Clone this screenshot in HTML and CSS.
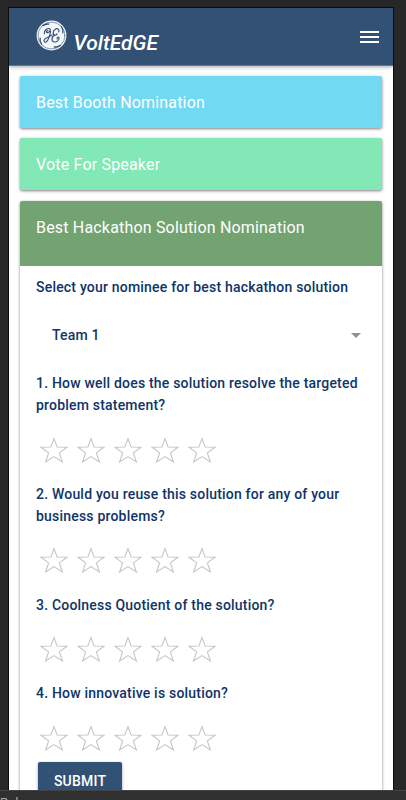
FILE: index.html
```html
<!DOCTYPE html>
<html lang="en">
  <head>
    <meta charset="UTF-8" />
    <meta name="viewport" content="width=device-width, initial-scale=1.0" />
    <title>VoltEdGE</title>
    <link rel="stylesheet" href="styles.css">
  </head>
  <body>
    <svg class="symbols">
      <symbol id="star" viewBox="0 0 28 26">
        <path d="M14 1.6 L17.1 10 L26.9 10.3 L19.4 15.9 L22.4 25 L14 19.6 L5.6 25 L8.6 15.9 L1.1 10.3 L10.9 10 Z" />
      </symbol>
    </svg>

    <div class="screen">
      <header class="header">
        <svg class="logo" viewBox="0 0 32 32">
          <circle class="logo-disc" cx="16" cy="16" r="15.4" />
          <circle class="logo-ring" cx="16" cy="16" r="13.9" />
          <path class="logo-swirl" d="M7 5.8 Q10.5 3.6 13.2 4.3 M26.2 7 Q28.4 10.5 27.7 13.2 M25 26.2 Q21.5 28.4 18.8 27.7 M5.8 25 Q3.6 21.5 4.3 18.8" />
          <path class="logo-mono" d="M8.6 14.2 C8 10.6 12 8 14.2 9 C16 10 13.4 13.6 11.2 13 C10 12.2 11.6 10.6 12.4 11.2 M15 11.8 C14.6 15 12.8 21.4 10.4 22.8 C8.6 23.4 7.6 21.6 8.8 20 C10.2 18.2 14 17.6 16.6 15.4 M23.4 12.2 C24.6 10.4 22.6 8.4 20.4 9.2 C17.2 10.6 17 15 19.4 15.6 C21 15.8 22 15 21.6 14.2 M19.6 15.6 C16.2 16.2 15.4 21.8 18.4 22.6 C21.2 23.2 24.8 20.6 23.6 18 C22.8 16.8 21.2 18.4 22 19.6" />
        </svg>
        <h1 class="brand">VoltEdGE</h1>
        <button class="menu-btn" aria-label="Menu">
          <span></span>
          <span></span>
          <span></span>
        </button>
      </header>

      <main class="content">
        <div class="card card-booth">Best Booth Nomination</div>
        <div class="card card-speaker">Vote For Speaker</div>

        <div class="card card-open">
          <div class="card-title">Best Hackathon Solution Nomination</div>
          <div class="card-body">
            <p class="question">Select your nominee for best hackathon solution</p>
            <div class="select">
              <span>Team 1</span>
              <i class="caret"></i>
            </div>

            <p class="question">1. How well does the solution resolve the targeted problem statement?</p>
            <div class="stars">
              <svg><use href="#star" /></svg>
              <svg><use href="#star" /></svg>
              <svg><use href="#star" /></svg>
              <svg><use href="#star" /></svg>
              <svg><use href="#star" /></svg>
            </div>

            <p class="question">2. Would you reuse this solution for any of your business problems?</p>
            <div class="stars">
              <svg><use href="#star" /></svg>
              <svg><use href="#star" /></svg>
              <svg><use href="#star" /></svg>
              <svg><use href="#star" /></svg>
              <svg><use href="#star" /></svg>
            </div>

            <p class="question">3. Coolness Quotient of the solution?</p>
            <div class="stars">
              <svg><use href="#star" /></svg>
              <svg><use href="#star" /></svg>
              <svg><use href="#star" /></svg>
              <svg><use href="#star" /></svg>
              <svg><use href="#star" /></svg>
            </div>

            <p class="question">4. How innovative is solution?</p>
            <div class="stars stars-last">
              <svg><use href="#star" /></svg>
              <svg><use href="#star" /></svg>
              <svg><use href="#star" /></svg>
              <svg><use href="#star" /></svg>
              <svg><use href="#star" /></svg>
            </div>

            <button class="submit-btn">SUBMIT</button>
          </div>
        </div>
      </main>
    </div>

    <footer class="bottom-bar">Rules</footer>
  </body>
</html>
```
FILE: styles.css
```css
* {
  margin: 0;
  padding: 0;
  box-sizing: border-box;
}

body {
  height: 800px;
  padding-top: 8px;
  display: flex;
  flex-direction: column;
  overflow: hidden;
  background: #272727;
  font-family: Roboto, sans-serif;
}

.symbols {
  display: none;
}

.screen {
  width: 383.5px;
  height: 781.5px;
  margin-left: 9px;
  flex: none;
  overflow: hidden;
  background: #fff;
  box-shadow: 0 0 0 1px #0c0c0c;
}

.header {
  height: 58px;
  padding: 0 14px 0 27px;
  display: flex;
  align-items: center;
  background: #335075;
  border-bottom: 1px solid #6b7593;
  box-shadow: 0 1px 4px rgba(0, 0, 0, 0.35);
}

.logo {
  width: 31px;
  height: 31px;
  margin-top: -3px;
}

.logo-disc {
  fill: #f4f7fa;
}

.logo-ring,
.logo-swirl,
.logo-mono {
  fill: none;
  stroke: #335075;
  stroke-linecap: round;
}

.logo-ring {
  stroke-width: 0.6;
}

.logo-swirl {
  stroke-width: 1.3;
}

.logo-mono {
  stroke-width: 1.2;
}

.brand {
  margin: 12px auto 0 6.5px;
  color: #fff;
  font-size: 21px;
  font-weight: 500;
  font-style: italic;
  line-height: 24px;
}

.menu-btn {
  width: 19px;
  display: flex;
  flex-direction: column;
  gap: 3px;
  border: none;
  background: none;
}

.menu-btn span {
  height: 2px;
  background: #fff;
}

.content {
  padding: 10px 10.5px 0 11px;
  display: flex;
  flex-direction: column;
  gap: 10.4px;
}

.card {
  border-radius: 2px;
  color: #fff;
  font-size: 16px;
  letter-spacing: 0.18px;
  line-height: 20px;
  box-shadow: 0 1px 3px rgba(0, 0, 0, 0.5);
}

.card-booth,
.card-speaker {
  height: 52px;
  padding: 17px 16px 15px;
}

.card-booth {
  background: #72d9f3;
}

.card-speaker {
  background: #82e8b5;
}

.card-open {
  height: 640px;
  overflow: hidden;
}

.card-title {
  height: 65px;
  padding: 17px 16px 16px;
  background: #73a371;
}

.card-body {
  padding: 10.4px 16px 0;
  color: #0f3468;
  font-size: 14px;
  font-weight: 500;
  letter-spacing: 0.2px;
  line-height: 22px;
}

.select {
  height: 54px;
  margin: 10px 5px 10px 16px;
  display: flex;
  align-items: center;
  justify-content: space-between;
}

.caret {
  border: 5px solid transparent;
  border-top-color: #919191;
  border-bottom: none;
}

.stars {
  height: 66.7px;
  padding: 20.5px 0 0 4.4px;
  display: flex;
  gap: 8.8px;
}

.stars-last {
  height: 58px;
}

.stars svg {
  width: 28px;
  height: 26px;
  fill: none;
  stroke: #c5c6cc;
  stroke-width: 1.1;
}

.submit-btn {
  width: 84px;
  height: 38px;
  margin-left: 2px;
  display: block;
  border: none;
  border-radius: 2px;
  background: #335075;
  color: #fff;
  font-family: inherit;
  font-size: 14px;
  font-weight: 500;
  letter-spacing: 0.2px;
  box-shadow: 0 1px 3px rgba(0, 0, 0, 0.4);
}

.bottom-bar {
  height: 40px;
  padding-top: 5px;
  flex: none;
  border-top: 1px solid #444;
  background: #303030;
  color: #aaa;
  font-size: 13px;
  line-height: 14px;
}
```
